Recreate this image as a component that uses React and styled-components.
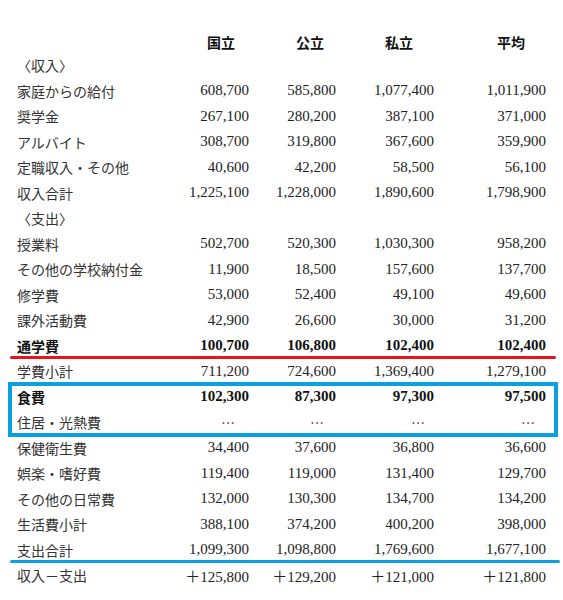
import styled, { createGlobalStyle } from "styled-components"

const Global = createGlobalStyle`
    body {
        margin: 0;
        background: #fff;
    }
`
const Wrapper = styled.main`
    width: 546px;
    margin-left: 10px;
    padding-top: 31px;
    font-family: "Liberation Serif", "Noto Sans CJK JP", serif;
    color: #222;
`
const Row = styled.div`
    position: relative;
    display: grid;
    grid-template-columns: 1fr 70px 87px 98px 112px;
    align-items: center;
    height: ${p => p.$head ? "21.5px" : "25.5px"};
    padding: 0 10px 0 7px;
    font-weight: ${p => p.$bold ? 700 : 400};
    color: ${p => p.$bold ? "#111" : "#333"};

    &::after {
        content: "";
        display: ${p => p.$line ? "block" : "none"};
        position: absolute;
        left: 0;
        right: ${p => p.$reach || 0}px;
        bottom: 0;
        height: 3px;
        border-radius: 2px;
        background: ${p => p.$line};
    }
`
const Label = styled.span`
    font-size: 14px;
    white-space: nowrap;
`
const Num = styled.span`
    font-size: 15px;
    text-align: right;
    white-space: nowrap;
    color: ${p => p.$bold ? "#111" : "#222"};
`
const Head = styled.span`
    font-size: 14px;
    font-weight: 700;
    color: #111;
    text-align: right;
    padding-right: ${p => p.$inset}px;
`
const Dots = styled.span`
    font-family: "Noto Sans CJK JP", sans-serif;
    font-size: 14px;
    color: #333;
    text-align: right;
    padding-right: ${p => p.$inset}px;
`
const Box = styled.div`
    outline: 4px solid #0b9fe4;
    outline-offset: -2px;
`

const red = "#e8141c"
const blue = "#0b9fe4"

const upper = [
    ["家庭からの給付", "608,700", "585,800", "1,077,400", "1,011,900"],
    ["奨学金", "267,100", "280,200", "387,100", "371,000"],
    ["アルバイト", "308,700", "319,800", "367,600", "359,900"],
    ["定職収入・その他", "40,600", "42,200", "58,500", "56,100"],
    ["収入合計", "1,225,100", "1,228,000", "1,890,600", "1,798,900"],
]
const school = [
    ["授業料", "502,700", "520,300", "1,030,300", "958,200"],
    ["その他の学校納付金", "11,900", "18,500", "157,600", "137,700"],
    ["修学費", "53,000", "52,400", "49,100", "49,600"],
    ["課外活動費", "42,900", "26,600", "30,000", "31,200"],
]
const living = [
    ["保健衛生費", "34,400", "37,600", "36,800", "36,600"],
    ["娯楽・嗜好費", "119,400", "119,000", "131,400", "129,700"],
    ["その他の日常費", "132,000", "130,300", "134,700", "134,200"],
    ["生活費小計", "388,100", "374,200", "400,200", "398,000"],
]

function Line({ cells, ...rest }) {
    return (
        <Row {...rest}>
            <Label>{cells[0]}</Label>
            {cells.slice(1).map((c, i) => <Num key={i} $bold={rest.$bold}>{c}</Num>)}
        </Row>
    )
}

export default function App() {
    return (
        <Wrapper>
            <Global />
            <Row $head>
                <span />
                <Head $inset={14}>国立</Head>
                <Head $inset={12}>公立</Head>
                <Head $inset={21}>私立</Head>
                <Head $inset={21}>平均</Head>
            </Row>
            <Row><Label>〈収入〉</Label></Row>
            {upper.map(r => <Line key={r[0]} cells={r} />)}
            <Row><Label>〈支出〉</Label></Row>
            {school.map(r => <Line key={r[0]} cells={r} />)}
            <Line $bold $line={red} cells={["通学費", "100,700", "106,800", "102,400", "102,400"]} />
            <Line cells={["学費小計", "711,200", "724,600", "1,369,400", "1,279,100"]} />
            <Box>
                <Line $bold cells={["食費", "102,300", "87,300", "97,300", "97,500"]} />
                <Row>
                    <Label>住居・光熱費</Label>
                    <Dots $inset={14}>…</Dots>
                    <Dots $inset={12}>…</Dots>
                    <Dots $inset={9}>…</Dots>
                    <Dots $inset={11}>…</Dots>
                </Row>
            </Box>
            {living.map(r => <Line key={r[0]} cells={r} />)}
            <Line $line={blue} $reach={-4} cells={["支出合計", "1,099,300", "1,098,800", "1,769,600", "1,677,100"]} />
            <Line cells={["収入－支出", "＋125,800", "＋129,200", "＋121,000", "＋121,800"]} />
        </Wrapper>
    )
}
